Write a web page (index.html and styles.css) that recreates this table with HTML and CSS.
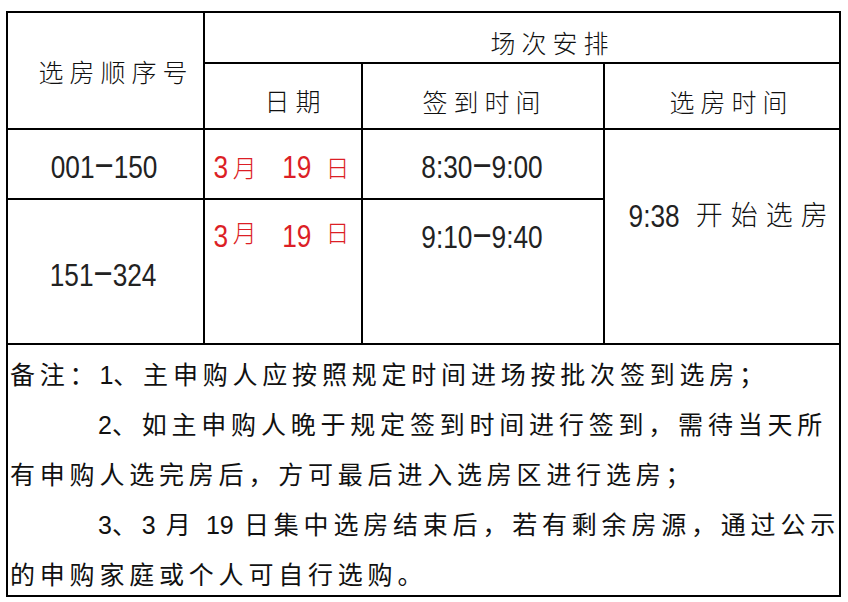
FILE: index.html
```html
<!DOCTYPE html>
<html lang="zh-CN">
<head>
<meta charset="utf-8">
<title>场次安排</title>
<link rel="stylesheet" href="styles.css">
</head>
<body>
<div class="sheet">
  <div class="cell seq"><span class="hd">选房顺序号</span></div>
  <div class="cell title"><span class="hd">场次安排</span></div>
  <div class="cell h-date"><span class="hd">日期</span></div>
  <div class="cell h-sign"><span class="hd">签到时间</span></div>
  <div class="cell h-pick"><span class="hd">选房时间</span></div>

  <div class="cell r1-seq num"><span class="nw">001<span class="dash">−</span>150</span></div>
  <div class="cell r1-date date"><span class="nw d3">3</span><span class="cn m">月</span><span class="nw d19">19</span><span class="cn r">日</span></div>
  <div class="cell r1-sign num"><span class="nw">8:30<span class="dash">−</span>9:00</span></div>
  <div class="cell pick num"><span class="nw">9:38</span><span class="pick-cn">开始选房</span></div>

  <div class="cell r2-seq num"><span class="nw">151<span class="dash">−</span>324</span></div>
  <div class="cell r2-date date"><span class="nw d3">3</span><span class="cn m">月</span><span class="nw d19">19</span><span class="cn r">日</span></div>
  <div class="cell r2-sign num"><span class="nw">9:10<span class="dash">−</span>9:40</span></div>

  <div class="cell notes">
    <p class="line">备注：<span class="nd">1</span>、主申购人应按照规定时间进场按批次签到选房；</p>
    <p class="line indent"><span class="nd">2</span>、如主申购人晚于规定签到时间进行签到，需待当天所</p>
    <p class="line">有申购人选完房后，方可最后进入选房区进行选房；</p>
    <p class="line indent"><span class="nd">3</span>、<span class="nd">3</span> 月 <span class="nd">19</span> 日集中选房结束后，若有剩余房源，通过公示</p>
    <p class="line">的申购家庭或个人可自行选购。</p>
  </div>
</div>
</body>
</html>
```

FILE: styles.css
```css
html, body {
  margin: 0;
  padding: 0;
  background: #fff;
}

body {
  font-family: "Liberation Sans", "Noto Sans CJK SC", sans-serif;
  color: #111;
}

.sheet {
  display: grid;
  grid-template-columns: 195px 156px 240px 234px;
  grid-template-rows: 49px 64px 68px 143px 250px;
  gap: 2px;
  padding: 2px;
  background: #000;
  width: max-content;
  margin: 11px 0 0 6px;
}

.cell {
  background: #fff;
  display: flex;
  align-items: center;
  justify-content: center;
  line-height: 1;
  box-sizing: border-box;
  white-space: nowrap;
}

.hd {
  font-family: "Noto Sans CJK SC", sans-serif;
  font-size: 25px;
  font-weight: 300;
  letter-spacing: 6px;
  margin-right: -6px;
}

.seq    { grid-column: 1; grid-row: 1 / span 2; padding: 1px 0 0 15px; }
.title  { grid-column: 2 / span 3; grid-row: 1; padding: 9px 0 0 55px; }
.h-date { grid-column: 2; grid-row: 2; padding: 8px 0 0 19px; }
.h-sign { grid-column: 3; grid-row: 2; padding: 10px 3px 0 0; }
.h-pick { grid-column: 4; grid-row: 2; padding: 10px 0 0 13px; }

.num {
  font-size: 32px;
}

/* narrow (Arial Narrow-like) figures */
.nw {
  display: inline-block;
  transform: scaleX(0.82);
  font-family: "Liberation Sans", sans-serif;
  color: #222;
}

.dash {
  font-size: 40px;
  line-height: 0;
  vertical-align: -1px;
}

.date {
  color: #dc1f26;
  font-size: 32px;
}

.date .nw {
  color: #dc1f26;
}

.date .cn {
  font-family: "Noto Sans CJK SC", sans-serif;
  font-size: 24px;
  font-weight: 300;
}

.date .d3  { margin-right: 3.5px; }
.date .m   { margin-right: 22.5px; }
.date .r   { margin-left: 10.6px; }

.r1-seq  { grid-column: 1; grid-row: 3; padding: 6px 3px 0 0; }
.r1-date { grid-column: 2; grid-row: 3; padding: 5px 5px 0 0; }
.r1-sign { grid-column: 3; grid-row: 3; padding: 6px 2px 0 0; }

.pick {
  grid-column: 4;
  grid-row: 3 / span 2;
  align-items: flex-start;
  padding: 70px 0 0 10px;
}

.pick .nw {
  margin: 0 -3px;
}

.pick-cn {
  font-family: "Noto Sans CJK SC", sans-serif;
  font-size: 27px;
  font-weight: 300;
  letter-spacing: 8px;
  margin: 0 -8px 0 13px;
}

.r2-seq  { grid-column: 1; grid-row: 4; padding: 7px 4px 0 0; }
.r2-date { grid-column: 2; grid-row: 4; align-items: flex-start; padding: 20px 5px 0 0; }
.r2-sign { grid-column: 3; grid-row: 4; align-items: flex-start; padding: 21px 3px 0 0; }

.notes {
  grid-column: 1 / span 4;
  grid-row: 5;
  display: block;
  padding: 5px 0 0 2px;
  font-size: 25px;
  line-height: 50px;
  letter-spacing: 4.8px;
  word-spacing: -1.5px;
}

.notes .line {
  margin: 0;
}

.notes .nd {
  letter-spacing: 0;
}

.notes .indent {
  padding-left: 88px;
}
```
